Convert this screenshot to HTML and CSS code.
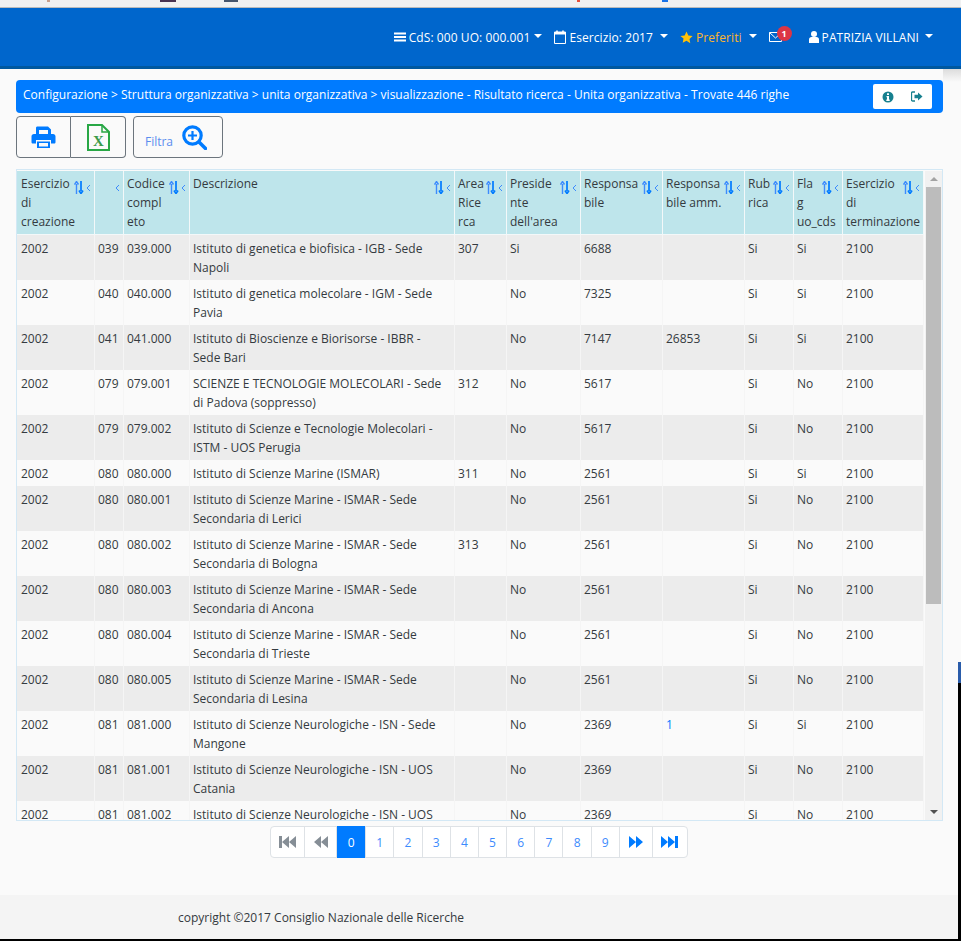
FILE: index.html
```html
<!DOCTYPE html>
<html lang="en">
<head>
  <meta charset="UTF-8" />
  <title>Unita organizzativa</title>
  <link rel="stylesheet" href="styles.css">
</head>
<body>
  <div class="topstrip">
    <i class="tab tab1"></i><i class="tab tab2"></i><i class="tab tab3"></i><i class="tab tab4"></i><i class="tab tab5"></i>
  </div>
  <nav class="navbar">
    <span class="navitem">
      <svg class="nicon" width="12" height="12" viewBox="0 0 12 12"><path d="M0 1.500h12v2H0zM0 5h12v2H0zM0 8.500h12v2H0z" fill="#fff"/></svg>
      CdS: 000 UO: 000.001<i class="caret"></i>
    </span>
    <span class="navitem">
      <svg class="nicon" width="12" height="14" viewBox="0 0 12 14"><path d="M3 .5v2M9 .5v2" stroke="#fff" stroke-width="1.600" fill="none"/><path d="M.5 2h11v11.500H.5z" fill="none" stroke="#fff"/><path d="M.5 2h11v2.500H.5z" fill="#fff"/></svg>
      Esercizio: 2017<i class="caret wide"></i>
    </span>
    <span class="navitem fav">
      <svg class="nicon" width="13" height="13" viewBox="0 0 24 24"><path d="M12 1l3.400 7.300 7.900 1-5.800 5.500 1.500 7.900L12 18l-7 3.700 1.500-7.900L.7 9.300l7.900-1z" fill="#ffc107"/></svg>
      Preferiti<i class="caret wide"></i>
    </span>
    <span class="navitem mail">
      <svg width="13" height="10" viewBox="0 0 13 10"><path d="M.5.500h12v9H.5z" fill="none" stroke="#fff"/><path d="M.5.500L6.500 6l6-5.500" fill="none" stroke="#fff"/></svg>
      <b class="badge">1</b>
    </span>
    <span class="navitem user">
      <svg class="nicon" width="10" height="12" viewBox="0 0 10 12"><circle cx="5" cy="3" r="3" fill="#fff"/><path d="M0 12V8.500C0 7 1 6 2.500 6h5C9 6 10 7 10 8.500V12z" fill="#fff"/></svg>
      PATRIZIA VILLANI<i class="caret user-caret"></i>
    </span>
  </nav>
  <div class="navshade"></div>

  <main class="content">
    <div class="crumb">
      <span>Configurazione &gt; Struttura organizzativa &gt; unita organizzativa &gt; visualizzazione - Risultato ricerca - Unita organizzativa - Trovate 446 righe</span>
      <div class="crumb-btns">
        <svg width="12" height="12" viewBox="0 0 12 12"><circle cx="6" cy="6" r="5.500" fill="#17808f"/><path d="M5 2.300h2v1.700H5zM4.500 5h2.500v3.600h.7V10H4.300V8.600H5V6.300h-.5z" fill="#fff"/></svg>
        <svg width="12" height="11" viewBox="0 0 12 11"><path d="M4 1H1.500C.7 1 .5 1.500.5 2v7c0 .5.200 1 1 1H4" fill="none" stroke="#17808f" stroke-width="1.300"/><path d="M3.500 3.800h3.500V1.500L11.500 5.500 7 9.500V7.200H3.500z" fill="#17808f"/></svg>
      </div>
    </div>

    <div class="toolbar">
      <div class="btngroup">
        <button class="tbtn print">
          <svg width="25" height="23" viewBox="0 0 25 23"><path d="M5 9V2c0-1 .6-1.500 1.500-1.500H17L20 3.500V9h-3V4h-9v5z" fill="#007bff"/><path d="M3 8h19c1.500 0 2.500 1 2.500 2.500V16c0 1-.5 1.500-1.500 1.500h-3V14H5v3.500H2c-1 0-1.500-.5-1.500-1.500v-5.500C.5 9 1.500 8 3 8z" fill="#007bff"/><path d="M6 15.500h13V22H6z" fill="#007bff"/><path d="M8 17h9v3.500H8z" fill="#fafafa"/></svg>
        </button>
        <button class="tbtn excel">
          <svg width="23" height="27" viewBox="0 0 23 27"><path d="M1 1h14l7 7v18H1z" fill="none" stroke="#28a745" stroke-width="2"/><path d="M15 1v7h7" fill="none" stroke="#28a745" stroke-width="1.500"/><text x="11.500" y="22" class="xmark">X</text></svg>
        </button>
      </div>
      <button class="tbtn filtra">
        <span>Filtra</span>
        <svg width="25" height="25" viewBox="0 0 25 25"><circle cx="10.500" cy="10.500" r="8.700" fill="none" stroke="#007bff" stroke-width="3.200"/><path d="M17 17l6.500 6.500" stroke="#007bff" stroke-width="3.600" stroke-linecap="round"/><path d="M10.500 6v9M6 10.500h9" stroke="#007bff" stroke-width="2.200"/></svg>
      </button>
    </div>

    <div class="tablebox">
      <div class="tablescroll">
        <table class="grid">
          <colgroup>
            <col class="c1"><col class="c2"><col class="c3"><col class="c4"><col class="c5"><col class="c6"><col class="c7"><col class="c8"><col class="c9"><col class="c10"><col class="c11">
          </colgroup>
          <thead id="head"></thead>
          <tbody id="rows"></tbody>
        </table>
      </div>
      <div class="scrollbar">
        <div class="arrow up"></div>
        <div class="thumb"></div>
        <div class="arrow down"></div>
      </div>
    </div>

    <div class="pagerwrap">
      <ul class="pager">
        <li class="muted first"><svg width="17" height="12" viewBox="0 0 17 12"><path d="M0 0h3v12H0zM10 0v12L3 6zM17 0v12l-7-6z"/></svg></li>
        <li class="muted"><svg width="14" height="12" viewBox="0 0 14 12"><path d="M7 0v12L0 6zM14 0v12L7 6z"/></svg></li>
        <li class="active">0</li>
        <li>1</li><li>2</li><li>3</li><li>4</li><li>5</li><li>6</li><li>7</li><li>8</li><li>9</li>
        <li class="blue"><svg width="14" height="12" viewBox="0 0 14 12"><path d="M0 0v12l7-6zM7 0v12l7-6z"/></svg></li>
        <li class="blue last"><svg width="17" height="12" viewBox="0 0 17 12"><path d="M0 0v12l7-6zM7 0v12l7-6zM14 0h3v12h-3z"/></svg></li>
      </ul>
    </div>
  </main>

  <footer class="footer">copyright ©2017 Consiglio Nazionale delle Ricerche</footer>
  <div class="edge-blue"></div>
  <div class="edge-black"></div>

  <script>
    const sort = '<svg class="sorticon" width="10" height="13" viewBox="0 0 10 13"><path d="M2.500 13V3M0.500 3.500L2.500 .5l2 3" stroke="#3d8bfd" fill="none" stroke-width="1.400"/><path d="M7 0v10M5 9.500l2 3 2-3" stroke="#007bff" fill="none" stroke-width="1.700"/></svg>';
    const chev = '<svg class="chev" width="5" height="8" viewBox="0 0 5 8"><path d="M4 1L1 4l3 3" stroke="#3d8bfd" fill="none"/></svg>';
    const heads = [
      ["Esercizio<br>di<br>creazione", true], ["", false], ["Codice<br>compl<br>eto", true], ["Descrizione", true],
      ["Area<br>Rice<br>rca", true], ["Preside<br>nte<br>dell'area", true], ["Responsa<br>bile", true], ["Responsa<br>bile amm.", true],
      ["Rub<br>rica", true], ["Fla<br>g<br>uo_cds", true], ["Esercizio<br>di<br>terminazione", true]
    ];
    document.getElementById("head").innerHTML = "<tr>" + heads.map(h =>
      `<th><span class="thicons">${h[1] ? sort : ""}${chev}</span>${h[0]}</th>`
    ).join("") + "</tr>";

    const data = [
      ["039","039.000","Istituto di genetica e biofisica - IGB - Sede Napoli","307","Si","6688","","Si","Si"],
      ["040","040.000","Istituto di genetica molecolare - IGM - Sede Pavia","","No","7325","","Si","Si"],
      ["041","041.000","Istituto di Bioscienze e Biorisorse - IBBR - Sede Bari","","No","7147","26853","Si","Si"],
      ["079","079.001","SCIENZE E TECNOLOGIE MOLECOLARI - Sede di Padova (soppresso)","312","No","5617","","Si","No"],
      ["079","079.002","Istituto di Scienze e Tecnologie Molecolari - ISTM - UOS Perugia","","No","5617","","Si","No"],
      ["080","080.000","Istituto di Scienze Marine (ISMAR)","311","No","2561","","Si","Si"],
      ["080","080.001","Istituto di Scienze Marine - ISMAR - Sede Secondaria di Lerici","","No","2561","","Si","No"],
      ["080","080.002","Istituto di Scienze Marine - ISMAR - Sede Secondaria di Bologna","313","No","2561","","Si","No"],
      ["080","080.003","Istituto di Scienze Marine - ISMAR - Sede Secondaria di Ancona","","No","2561","","Si","No"],
      ["080","080.004","Istituto di Scienze Marine - ISMAR - Sede Secondaria di Trieste","","No","2561","","Si","No"],
      ["080","080.005","Istituto di Scienze Marine - ISMAR - Sede Secondaria di Lesina","","No","2561","","Si","No"],
      ["081","081.000","Istituto di Scienze Neurologiche - ISN - Sede Mangone","","No","2369","1","Si","Si"],
      ["081","081.001","Istituto di Scienze Neurologiche - ISN - UOS Catania","","No","2369","","Si","No"],
      ["081","081.002","Istituto di Scienze Neurologiche - ISN - UOS","","No","2369","","Si","No"]
    ];
    document.getElementById("rows").innerHTML = data.map(r => {
      const cells = ["2002", ...r, "2100"];
      return "<tr>" + cells.map(c => `<td${c === "1" ? ' class="link"' : ""}>${c}</td>`).join("") + "</tr>";
    }).join("");
  </script>
</body>
</html>
```

FILE: styles.css
```css
* {
  box-sizing: border-box;
}

html, body {
  height: 100%;
}

body {
  font-family: "Open Sans", Arial, sans-serif;
  font-size: 12px;
  background: #fafafa;
  color: #343a40;
  margin: 0;
  height: 941px;
  overflow: hidden;
  position: relative;
  display: flex;
  flex-direction: column;
  border-bottom: 2px solid #000;
}

.topstrip {
  height: 8px;
  background: #f1f1f1;
  border-bottom: 1px solid #bbb;
  position: relative;
}

/* clipped browser tab icons along the top edge */
.tab {
  position: absolute;
  top: 0;
  height: 2px;
}

.tab1 { left: 47px; width: 3px; background: #c9a08c; }
.tab2 { left: 160px; width: 16px; background: #4a3352; }
.tab3 { left: 224px; width: 14px; background: #46566e; }
.tab4 { left: 577px; width: 3px; background: #e8503a; }
.tab5 { left: 662px; width: 6px; background: #1a73e8; }

.navbar {
  height: 61px;
  background: #0066cc;
  border-bottom: 3px solid #00589f;
  color: #fff;
  display: flex;
  align-items: center;
  justify-content: flex-end;
  padding: 0 28px 0 0;
  gap: 12px;
}

.navshade {
  position: absolute;
  top: 69px;
  left: 943px;
  right: 0;
  height: 13px;
  background: linear-gradient(#dcdcdc, #fafafa);
}

.navitem {
  display: flex;
  align-items: center;
  white-space: nowrap;
  letter-spacing: 0.08px;
}

.nicon {
  margin-right: 3px;
}

.caret {
  display: inline-block;
  margin-left: 4px;
  margin-bottom: 3px;
  border-left: 4px solid transparent;
  border-right: 4px solid transparent;
  border-top: 4px solid #fff;
}

.caret.wide {
  margin-left: 7px;
}

.caret.user-caret {
  margin-left: 6px;
}

.fav {
  color: #ffb52e;
}

.mail {
  position: relative;
  margin-right: 15px;
}

.badge {
  position: absolute;
  left: 8px;
  top: -6px;
  width: 15px;
  height: 15px;
  border-radius: 50%;
  background: #dc3545;
  color: #fff;
  font-size: 9px;
  line-height: 15px;
  text-align: center;
}

.content {
  flex: 1;
  padding: 11px 18px 0 16px;
  min-height: 0;
}

.crumb {
  height: 33px;
  background: #007bff;
  border-radius: 4px;
  color: #fff;
  display: flex;
  align-items: center;
  justify-content: space-between;
  padding: 0 11px 5px 7px;
  letter-spacing: 0.015px;
}

.crumb-btns {
  width: 59px;
  height: 25px;
  margin-top: 5px;
  background: #fff;
  border-radius: 2px;
  display: flex;
  align-items: center;
  justify-content: center;
  gap: 17px;
}

.toolbar {
  display: flex;
  gap: 7px;
  margin-top: 3px;
}

.btngroup {
  display: flex;
}

.tbtn {
  height: 42px;
  background: transparent;
  border: 1px solid #6c757d;
  border-radius: 4px;
  padding: 0;
  display: flex;
  align-items: center;
  justify-content: center;
}

.print {
  width: 55px;
  border-radius: 4px 0 0 4px;
}

.excel {
  width: 55px;
  border-left: none;
  border-radius: 0 4px 4px 0;
}

.xmark {
  font-family: "Liberation Serif", serif;
  font-size: 15px;
  font-weight: bold;
  fill: #3a9a4a;
  text-anchor: middle;
}

.filtra {
  width: 90px;
  gap: 9px;
  padding-right: 4px;
  color: #5b8def;
  font-family: "Open Sans", Arial, sans-serif;
  font-size: 12px;
}

.filtra span {
  margin-top: 9px;
}

.tablebox {
  margin-top: 11px;
  height: 652px;
  border: 1px solid #d3e8f5;
  display: flex;
  padding-top: 1px;
}

.tablescroll {
  width: 908px;
  overflow: hidden;
}

.grid {
  table-layout: fixed;
  width: 907px;
  border-collapse: separate;
  border-spacing: 0;
}

.c1 { width: 78px; }
.c2 { width: 29px; }
.c3 { width: 66px; }
.c4 { width: 265px; }
.c5 { width: 52px; }
.c6 { width: 74px; }
.c7 { width: 82px; }
.c8 { width: 82px; }
.c9 { width: 49px; }
.c10 { width: 49px; }
.c11 { width: 81px; }

.grid th {
  background: #bee5eb;
  font-weight: normal;
  text-align: left;
  vertical-align: top;
  padding: 3px 3px 3px 3px;
  border-right: 1px solid #f3f8f9;
  border-bottom: 1px solid #f3f8f9;
  line-height: 19px;
  height: 64px;
  white-space: nowrap;
}

.thicons {
  float: right;
  display: flex;
  align-items: center;
  gap: 2px;
  height: 19px;
  margin-top: 4px;
}

.grid td {
  padding: 4px 3px 3px 3px;
  line-height: 19px;
  vertical-align: top;
  border-right: 1px solid #f5f5f5;
}

.grid th:first-child,
.grid td:first-child {
  padding-left: 4px;
}

.grid tbody tr:nth-child(odd) td {
  background: #ececec;
}

.grid td.link {
  color: #007bff;
}

.scrollbar {
  width: 17px;
  background: #f1f1f1;
  display: flex;
  flex-direction: column;
  align-items: center;
  margin-left: 1px;
}

.arrow {
  height: 17px;
  width: 100%;
  display: flex;
  align-items: center;
  justify-content: center;
  flex: none;
}

.arrow.up {
  height: 16px;
}

.arrow::before {
  content: "";
  border-left: 4px solid transparent;
  border-right: 4px solid transparent;
}

.up::before {
  border-bottom: 4px solid #a3a3a3;
}

.down {
  margin-top: auto;
}

.down::before {
  border-top: 4px solid #505050;
}

.thumb {
  width: 15px;
  height: 417px;
  background: #bcbcbc;
}

.pagerwrap {
  display: flex;
  justify-content: center;
  margin-top: 5px;
  padding-right: 1px;
}

.pager {
  list-style: none;
  margin: 0;
  padding: 0;
  display: flex;
  height: 32px;
  border: 1px solid #dee2e6;
  border-radius: 4px;
  background: #fff;
}

.pager li {
  width: 28.2px;
  display: flex;
  align-items: center;
  justify-content: center;
  color: #3d8bfd;
  border-right: 1px solid #dee2e6;
}

.pager li:last-child {
  border-right: none;
}

.pager li.muted {
  width: 32px;
}

.pager li.blue {
  width: 33px;
}

.pager li.first,
.pager li.last {
  width: 34px;
}

.pager li svg {
  fill: #007bff;
}

.pager li.muted svg {
  fill: #868e96;
}

.pager li.active {
  width: 29px;
  background: #007bff;
  color: #fff;
  margin: -1px 0;
}

.footer {
  height: 44px;
  background: #f4f4f4;
  padding: 14px 0 0 178px;
  margin-right: 3px;
  flex: none;
}

.edge-blue {
  position: absolute;
  right: 0;
  top: 662px;
  width: 3px;
  height: 21px;
  background: #2a5caa;
}

.edge-black {
  position: absolute;
  right: 0;
  top: 683px;
  bottom: 0;
  width: 3px;
  background: #000;
}
```
